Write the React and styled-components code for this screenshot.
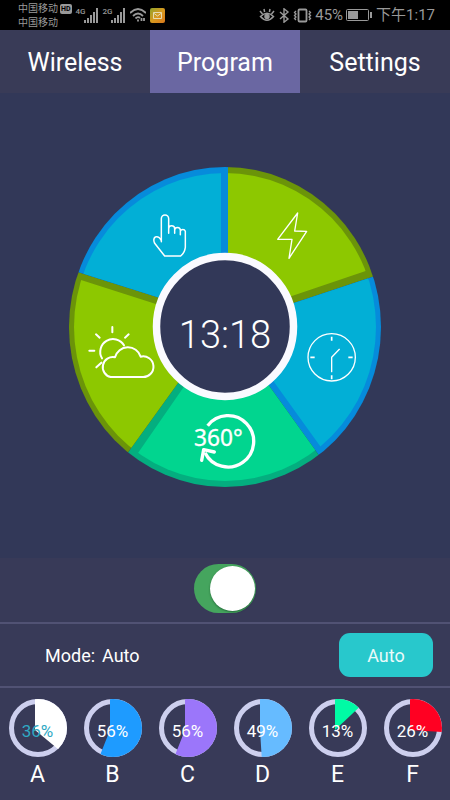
import React, { useState } from "react";
import styled, { createGlobalStyle } from "styled-components";

const GlobalStyle = createGlobalStyle`
  * { box-sizing: border-box; }
  body {
    margin: 0;
    background: #383a58;
    color: #fff;
    font-family: Roboto, "Noto Sans CJK SC", sans-serif;
  }
  button { font: inherit; color: inherit; border: 0; padding: 0; background: none; cursor: pointer; }
`;

const Screen = styled.div`
  min-height: 100vh;
  display: flex;
  flex-direction: column;
`;

/* status bar */
const StatusBar = styled.header`
  height: 30px;
  padding: 0 15px 0 18px;
  display: flex;
  justify-content: space-between;
  background: #000;
  color: #999;
`;
const StatusGroup = styled.div`
  display: flex;
  align-items: center;
  gap: ${(p) => p.$gap}px;
`;
const Carriers = styled.div`
  padding-top: 1px;
  font-size: 10px;
  line-height: 14px;
  white-space: nowrap;
`;
const CarrierLine = styled.div`
  display: flex;
  align-items: center;
  gap: 2px;
`;
const HdBadge = styled.span`
  padding: 0 1px;
  border-radius: 2px;
  background: #999;
  color: #000;
  font-size: 7px;
  font-weight: 700;
  line-height: 10px;
`;
const Signal = styled.div`
  display: flex;
  align-items: flex-start;
  height: 15px;
`;
const Network = styled.span`
  width: 8px;
  font-size: 8px;
  line-height: 8px;
  font-weight: 500;
`;
const StatusText = styled.span`
  font-size: 15px;
  line-height: 20px;
  white-space: nowrap;
`;

/* tabs */
const Tabs = styled.nav`
  display: grid;
  grid-template-columns: repeat(3, 1fr);
  background: #393b57;
`;
const Tab = styled.button`
  height: 63px;
  font-size: 25px;
  line-height: 30px;
  && { padding-top: 2px; background: ${(p) => (p.$active ? "#6a67a2" : "transparent")}; }
`;

/* wheel */
const WheelArea = styled.section`
  display: flex;
  justify-content: center;
  padding: 74px 0 71px;
  background: #323858;
`;
const Wheel = styled.div`
  position: relative;
  width: 312px;
  height: 320px;
`;
const WheelArt = styled.svg`
  display: block;
  width: 100%;
  height: 100%;
`;
const Clock = styled.time`
  position: absolute;
  inset: 0;
  display: flex;
  align-items: center;
  justify-content: center;
  padding-top: 16px;
  font-size: 38px;
  font-weight: 300;
  line-height: 44px;
  pointer-events: none;
`;
const SectorButton = styled.button`
  position: absolute;
  left: ${(p) => p.$x}px;
  top: ${(p) => p.$y}px;
  width: ${(p) => p.$w}px;
  height: ${(p) => p.$h}px;
  svg { display: block; width: 100%; height: 100%; }
`;

/* switch */
const SwitchRow = styled.div`
  display: flex;
  justify-content: center;
  padding: 6px 0 9px;
`;
const Switch = styled.input`
  appearance: none;
  display: flex;
  align-items: center;
  justify-content: ${(p) => (p.checked ? "flex-end" : "flex-start")};
  width: 62px;
  height: 49px;
  margin: 0;
  padding: 1px;
  border-radius: 25px;
  background: ${(p) => (p.checked ? "#45a55e" : "#6b6d88")};
  cursor: pointer;
  &::before {
    content: "";
    width: 45px;
    height: 45px;
    border-radius: 50%;
    background: #fff;
    box-shadow: 0 1px 2px rgba(0, 50, 20, 0.5);
  }
`;

/* mode */
const ModeRow = styled.section`
  display: flex;
  align-items: center;
  justify-content: space-between;
  height: 66px;
  padding: 0 17px 0 45px;
  border-top: 2px solid #515274;
  border-bottom: 2px solid #515274;
  font-size: 18px;
`;
const ModeText = styled.p`
  display: flex;
  gap: 7px;
  margin: 0;
  padding-top: 2px;
  line-height: 24px;
`;
const ModeButton = styled.button`
  width: 94px;
  height: 44px;
  && { background: #28c8cc; color: #eafafa; }
  border-radius: 11px;
`;

/* channels */
const Channels = styled.section`
  display: grid;
  grid-template-columns: repeat(6, 1fr);
  padding-top: 11px;
`;
const Channel = styled.button`
  display: flex;
  flex-direction: column;
  align-items: center;
`;
const Dial = styled.span`
  position: relative;
  width: 58px;
  height: 58px;
  svg { display: block; }
`;
const Percent = styled.span`
  position: absolute;
  inset: 0;
  display: flex;
  align-items: center;
  justify-content: center;
  padding-top: 6px;
  font-size: 17px;
  color: ${(p) => p.$color};
`;
const ChannelName = styled.span`
  margin-top: 3px;
  font-size: 23px;
  line-height: 30px;
`;

const CENTER = [156, 160];
const extend = ([[x1, y1], [x2, y2]]) => {
  const at = (t) => [x1 + (x2 - x1) * t, y1 + (y2 - y1) * t];
  return [at(-0.3), at(2.5)];
};
const fan = (a, b) => {
  const [a1, a2] = extend(a);
  const [b1, b2] = extend(b);
  return [CENTER, a1, a2, b2, b1].map((p) => p.join(",")).join(" ");
};

const edge = {
  top: [[159, 86], [159, 0]],
  right: [[225, 136], [303, 110]],
  lowerRight: [[201, 220], [249, 287]],
  lowerLeft: [[109, 216], [60, 284]],
  left: [[88, 130], [9, 105]],
};
const inset = {
  top: [[152, 86], [152, 0]],
  right: [[223, 129], [297, 104]],
  lowerRight: [[205, 215], [251, 279]],
  lowerLeft: [[114, 221], [69, 286]],
  left: [[87, 137], [12, 113]],
};
const sectors = [
  { rim: "#6b9409", fill: "#8dc800", outer: [edge.top, edge.right], inner: [edge.top, inset.right] },
  { rim: "#068bdb", fill: "#02afd6", outer: [edge.right, edge.lowerRight], inner: [edge.right, inset.lowerRight] },
  { rim: "#04ae7f", fill: "#01d58f", outer: [edge.lowerRight, edge.lowerLeft], inner: [edge.lowerRight, inset.lowerLeft] },
  { rim: "#6b9409", fill: "#8dc800", outer: [edge.lowerLeft, edge.left], inner: [edge.lowerLeft, inset.left] },
  { rim: "#068bdb", fill: "#02afd6", outer: [edge.left, edge.top], inner: [edge.left, inset.top] },
];

const stroke = { fill: "none", stroke: "#fff", strokeLinecap: "round", strokeLinejoin: "round" };

const programs = [
  {
    label: "Manual", x: 83, y: 46, w: 35, h: 45,
    icon: (
      <svg viewBox="276 159 105 135" {...stroke} strokeWidth="4.500">
        <path d="M304 245V176a11 11 0 0 1 22 0V220M326 206a9 9 0 0 1 18 0V220M344 211a8 8 0 0 1 17 0V224M361 214a8 8 0 0 1 15 0V262Q374 278 362 288H314L284 250Q278 236 286 231Q297 228 304 242" />
      </svg>
    ),
  },
  {
    label: "Lightning", x: 207, y: 43, w: 33, h: 50,
    icon: (
      <svg viewBox="168 150 99 150" {...stroke} strokeWidth="4">
        <path d="M233 159L224 213L260 214L207 295L216 238L173 238Z" />
      </svg>
    ),
  },
  {
    label: "Timer", x: 237, y: 165, w: 51, h: 51,
    icon: (
      <svg viewBox="258 36 153 153" {...stroke} strokeWidth="4">
        <circle cx="335" cy="112" r="71" />
        <path d="M335 155V112L358 88" />
        <path d="M335 50V62M335 166V178M271 112H284M385 112H398" strokeLinecap="butt" strokeWidth="5" />
      </svg>
    ),
  },
  {
    label: "360°", x: 124, y: 245, w: 64, h: 59,
    icon: (
      <svg viewBox="399 276 192 177" {...stroke} strokeWidth="10">
        <path d="M443 317A77 77 0 1 1 435 398" strokeLinecap="butt" />
        <path d="M425 421L431 389L463 396" />
        <text x="402" y="378" fill="#fff" stroke="#fff" strokeWidth="1" fontFamily="Noto Sans, sans-serif" fontSize="68">360°</text>
      </svg>
    ),
  },
  {
    label: "Weather", x: 18, y: 157, w: 68, h: 55,
    icon: (
      <svg viewBox="81 12 204 165" {...stroke} strokeWidth="6">
        <path d="M152 171A30 30 0 1 1 165 112A40 40 0 0 1 242 110A31 31 0 1 1 247 171Z" />
        <path d="M126 115A38 38 0 1 1 192 76M157 21V37M108 43L119 53M206 43L195 53M88 92H103M109 142L124 128" />
      </svg>
    ),
  },
];

const channels = [
  { name: "A", value: 36, color: "#ffffff", text: "#2fa9c4" },
  { name: "B", value: 56, color: "#1e9bff" },
  { name: "C", value: 56, color: "#9b76fa" },
  { name: "D", value: 49, color: "#66bbff" },
  { name: "E", value: 13, color: "#00fba5" },
  { name: "F", value: 26, color: "#ff0022" },
];

const wedge = (value) => {
  const pts = ["26,31", "26,-60"];
  for (let q = 12.5; q < value; q += 12.5) {
    const a = (q / 100) * Math.PI * 2;
    pts.push(`${26 + 91 * Math.sin(a)},${31 - 91 * Math.cos(a)}`);
  }
  const end = (value / 100) * Math.PI * 2;
  pts.push(`${26 + 91 * Math.sin(end)},${31 - 91 * Math.cos(end)}`);
  return pts.join(" ");
};

const Bars = () => (
  <svg width="15" height="15" viewBox="0 0 15 15" fill="#999">
    <path d="M0 12h2v3H0zM3 10h2v5H3zM6 7h2v8H6zM9 4h2v11H9zM12 0h2v15h-2z" />
  </svg>
);

export default function App() {
  const [tab, setTab] = useState("Program");
  const [on, setOn] = useState(true);
  return (
    <Screen>
      <GlobalStyle />
      <StatusBar>
        <StatusGroup $gap={4}>
          <Carriers>
            <CarrierLine>中国移动<HdBadge>HD</HdBadge></CarrierLine>
            <CarrierLine>中国移动</CarrierLine>
          </Carriers>
          <Signal><Network>4G</Network><Bars /></Signal>
          <Signal><Network>2G</Network><Bars /></Signal>
          <svg width="16" height="14" viewBox="0 0 16 14" fill="none" stroke="#999" strokeWidth="1.8">
            <path d="M0 5Q8-3 16 5M3 8Q8 3 13 8M5.500 10.500Q8 8 10 10" />
            <path d="M8 11.500v2M11.500 10v3M14 10v3" />
          </svg>
          <svg width="15" height="15" viewBox="0 0 15 15">
            <defs>
              <linearGradient id="mail" x1="0" y1="0" x2="1" y2="1">
                <stop offset="0" stopColor="#8fa32c" />
                <stop offset=".5" stopColor="#d79a1f" />
                <stop offset="1" stopColor="#d8771c" />
              </linearGradient>
            </defs>
            <rect width="15" height="15" rx="2" fill="url(#mail)" />
            <path d="M3.500 4.500h8v6h-8zM3.500 5l4 3 4-3" fill="none" stroke="#e6dcb0" />
          </svg>
        </StatusGroup>
        <StatusGroup $gap={3}>
          <svg width="16" height="14" viewBox="0 0 16 14" fill="none" stroke="#999" strokeWidth="1.5">
            <path d="M1.500 8.500Q8 2 14.500 8.500Q8 16 1.500 8.500zM1 3l2.500 3M5 1l.6 3M11 1l-.6 3M15 3l-2.500 3" />
            <circle cx="8" cy="8.500" r="2" fill="#999" />
          </svg>
          <svg width="12" height="15" viewBox="0 0 12 15" fill="none" stroke="#999" strokeWidth="1.4">
            <path d="M2 4l8 7-4 3.200V.8L10 4l-8 7" />
          </svg>
          <svg width="19" height="15" viewBox="0 0 19 15" fill="none" stroke="#999" strokeWidth="1.8">
            <rect x="5.500" y="1.500" width="8" height="12" rx="1" />
            <path d="M3 3L1.500 4.500 3 6 1.500 7.500 3 9 1.500 10.500 3 12M16 3l1.500 1.500L16 6l1.500 1.500L16 9l1.500 1.500L16 12" strokeWidth="1.3" />
          </svg>
          <StatusText>45%</StatusText>
          <svg width="27" height="12" viewBox="0 0 27 12">
            <rect x=".5" y=".5" width="22" height="11" rx="1" fill="none" stroke="#999" />
            <path d="M2 2h10v8H2zM24 3h2v6h-2z" fill="#999" />
          </svg>
          <StatusText>下午1:17</StatusText>
        </StatusGroup>
      </StatusBar>

      <Tabs>
        {["Wireless", "Program", "Settings"].map((name) => (
          <Tab key={name} type="button" $active={tab === name} onClick={() => setTab(name)}>{name}</Tab>
        ))}
      </Tabs>

      <WheelArea>
        <Wheel>
          <WheelArt viewBox="0 0 312 320">
            <defs>
              <clipPath id="rim"><ellipse cx="156" cy="160" rx="156" ry="160" /></clipPath>
              <clipPath id="face"><ellipse cx="156" cy="160" rx="151" ry="154" /></clipPath>
              <clipPath id="dial"><circle cx="29" cy="29" r="29" /></clipPath>
            </defs>
            <g clipPath="url(#rim)">
              {sectors.map((s, i) => <polygon key={i} points={fan(...s.outer)} fill={s.rim} />)}
            </g>
            <g clipPath="url(#face)">
              {sectors.map((s, i) => <polygon key={i} points={fan(...s.inner)} fill={s.fill} />)}
            </g>
            <ellipse cx="156" cy="159.500" rx="68.500" ry="70" fill="#323858" stroke="#fafaff" strokeWidth="7.500" />
          </WheelArt>
          {programs.map((p) => (
            <SectorButton key={p.label} type="button" aria-label={p.label} $x={p.x} $y={p.y} $w={p.w} $h={p.h}>
              {p.icon}
            </SectorButton>
          ))}
          <Clock>13:18</Clock>
        </Wheel>
      </WheelArea>

      <SwitchRow>
        <Switch type="checkbox" role="switch" aria-label="Power" checked={on} onChange={(e) => setOn(e.target.checked)} />
      </SwitchRow>

      <ModeRow>
        <ModeText><span>Mode:</span><span>Auto</span></ModeText>
        <ModeButton type="button">Auto</ModeButton>
      </ModeRow>

      <Channels>
        {channels.map((c) => (
          <Channel key={c.name} type="button">
            <Dial>
              <svg width="58" height="58" viewBox="0 0 58 58">
                <circle cx="29" cy="29" r="26.500" fill="none" stroke="#cdcfee" strokeWidth="5" />
                <g clipPath="url(#dial)"><polygon points={wedge(c.value)} fill={c.color} /></g>
              </svg>
              <Percent $color={c.text || "#fff"}>{c.value}%</Percent>
            </Dial>
            <ChannelName>{c.name}</ChannelName>
          </Channel>
        ))}
      </Channels>
    </Screen>
  );
}
